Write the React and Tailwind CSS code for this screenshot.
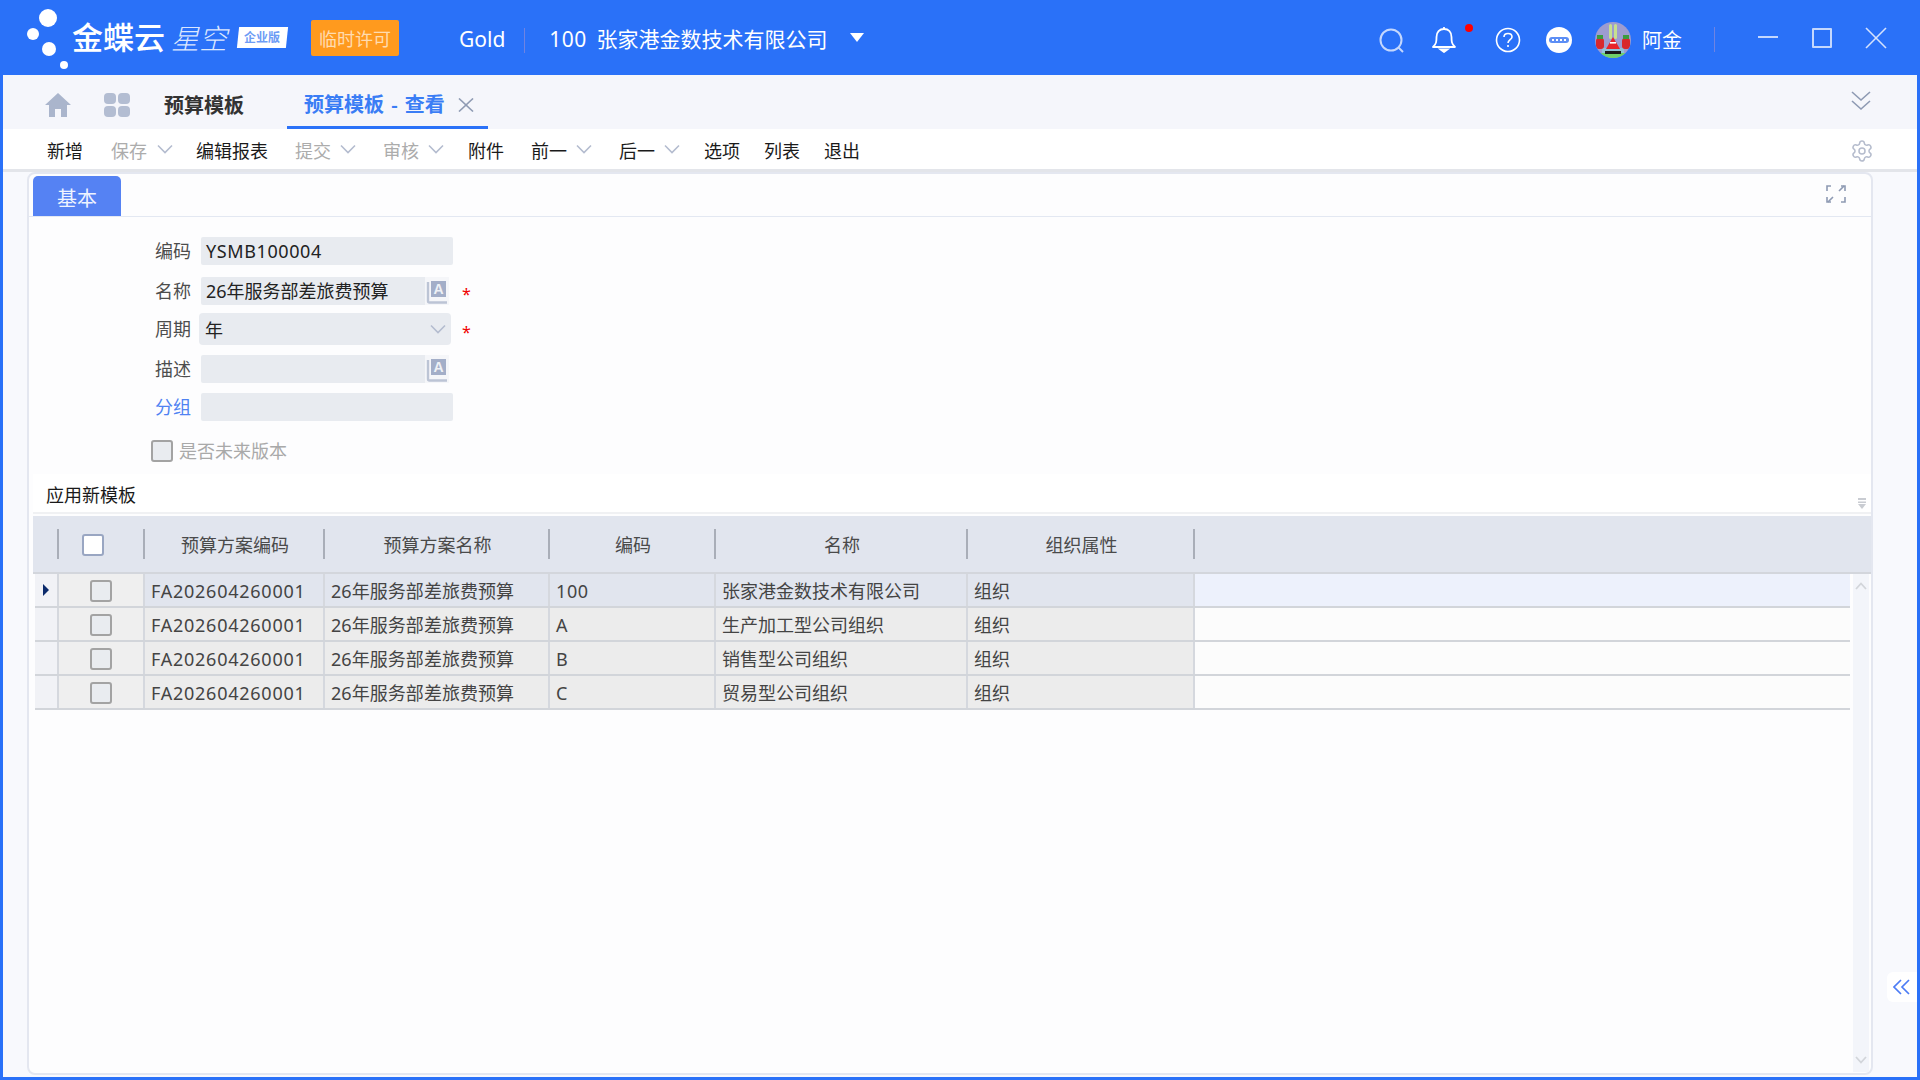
import React from "react";
import { Settings } from "lucide-react";

function Chev({ className = "", color = "#b4bccf" }) {
  return (
    <svg width="16" height="10" viewBox="0 0 16 10" fill="none" className={className}>
      <polyline points="1,1.5 8,8.5 15,1.5" stroke={color} strokeWidth="1.6" />
    </svg>
  );
}

function TransIcon() {
  return (
    <div className="w-[24px] h-[28px] bg-[#f5f6f9] flex items-center justify-center">
      <svg width="22" height="24" viewBox="0 0 22 24" fill="none" className="mt-[2px]">
        <rect x="5" y="1" width="15" height="16" fill="#a3aec8" />
        <path d="M2 2 V21 Q2 22.5 3.5 22.5 H21" stroke="#bcc4d5" strokeWidth="2.4" fill="none" />
        <text x="12.5" y="14" textAnchor="middle" fontSize="14" fontWeight="700" fill="#eef1f6" fontFamily="Liberation Sans, sans-serif">A</text>
      </svg>
    </div>
  );
}

function Avatar() {
  return (
    <svg width="36" height="36" viewBox="0 0 36 36" className="block">
      <defs><clipPath id="av"><circle cx="18" cy="18" r="18" /></clipPath></defs>
      <g clipPath="url(#av)">
        <rect width="36" height="36" fill="#9d9cd0" />
        <rect x="0" y="31" width="36" height="5" fill="#6fd06a" />
        <rect x="7" y="26" width="22" height="5" fill="#8fc3d8" />
        <rect x="10" y="29" width="16" height="3" fill="#1a1a1a" />
        <rect x="14" y="2" width="3" height="15" rx="1.5" fill="#c7e08f" />
        <rect x="19" y="2" width="3" height="15" rx="1.5" fill="#c7e08f" />
        <path d="M18 15 L25 27 H11 Z" fill="#e8242a" />
        <rect x="15" y="20" width="6" height="1.6" fill="#fff" />
        <rect x="1" y="16" width="8" height="11" rx="3" fill="#d8282c" />
        <rect x="27" y="16" width="8" height="11" rx="3" fill="#d8282c" />
        <rect x="2" y="13" width="6" height="4" fill="#3c9b3f" />
        <rect x="28" y="13" width="6" height="4" fill="#3c9b3f" />
      </g>
    </svg>
  );
}

function Header() {
  return (
    <div className="h-[75px] shrink-0 flex items-center text-white relative">
      <svg width="60" height="75" viewBox="0 0 60 75" className="ml-[20px] shrink-0" fill="#fff">
        <circle cx="28" cy="18" r="9" />
        <circle cx="13" cy="34" r="6" />
        <circle cx="29" cy="49" r="7" />
        <circle cx="44" cy="65" r="4" />
      </svg>
      <span className="ml-[-8px] text-[31px] leading-none font-medium text-white">金蝶云</span>
      <span className="ml-[6px] text-[28px] leading-none font-light italic text-[#dbe7ff]">星空</span>
      <div className="ml-[11px] w-[49px] h-[21px] bg-white -skew-x-6 flex items-center justify-center">
        <span className="text-[12px] leading-none font-bold text-[#6d9cf5] skew-x-6">企业版</span>
      </div>
      <div className="ml-[24px] w-[88px] h-[36px] bg-[#ff9a1e] rounded-[2px] flex items-center justify-center">
        <span className="text-[18px] leading-none text-[#ffdcb0] mt-[2px]">临时许可</span>
      </div>
      <span className="ml-[60px] text-[21px] leading-none mt-[4px]">Gold</span>
      <div className="ml-[19px] w-[1px] h-[25px] bg-[#6f83e2] mt-[6px]" />
      <span className="ml-[24px] text-[21px] leading-none mt-[4px] tracking-[0.4px]">100</span>
      <span className="ml-[10px] text-[21px] leading-none mt-[4px]">张家港金数技术有限公司</span>
      <svg width="14" height="9" viewBox="0 0 14 9" className="ml-[22px]" fill="#fff"><polygon points="0,0 14,0 7,9" /></svg>

      <div className="ml-auto flex items-center mt-[4px]">
        <svg width="28" height="28" viewBox="0 0 28 28" fill="none" stroke="#c4d7fd" strokeWidth="2" className="mt-[2px]">
          <circle cx="13" cy="13" r="10.5" />
          <line x1="20.5" y1="20.5" x2="25" y2="25" />
        </svg>
        <div className="relative ml-[24px] w-[28px] h-[28px] mb-[2px]">
          <svg width="28" height="28" viewBox="0 0 28 28" fill="none" stroke="#fff" strokeWidth="1.8">
            <path d="M3 22 C6.5 19 6.5 16 6.5 12 C6.5 7 9.5 4 14 4 C18.5 4 21.5 7 21.5 12 C21.5 16 21.5 19 25 22 Z" strokeLinejoin="round" />
            <path d="M14 2 V4" />
            <path d="M10.5 24.5 H17.5 L14 27 Z" fill="#fff" />
          </svg>
          <span className="absolute right-[-15px] top-[-1px] w-[8px] h-[8px] rounded-full bg-[#ff0000]" />
        </div>
        <svg width="26" height="26" viewBox="0 0 26 26" fill="none" stroke="#fff" strokeWidth="1.6" className="ml-[37px]">
          <circle cx="13" cy="13" r="11.5" />
          <path d="M9 10 C9 7.5 11 6.5 13 6.5 C15.5 6.5 17 8 17 10 C17 12.5 13 13 13 16" />
          <line x1="13" y1="18" x2="13" y2="20" />
        </svg>
        <div className="ml-[25px] w-[26px] h-[26px] rounded-full bg-white flex items-center justify-center">
          <div className="w-[20px] h-[6px] rounded-full bg-[#5c8ef5] flex items-center justify-center gap-[2px]">
            <span className="w-[2px] h-[2px] bg-white" />
            <span className="w-[2px] h-[2px] bg-white" />
            <span className="w-[2px] h-[2px] bg-white" />
            <span className="w-[2px] h-[2px] bg-white" />
          </div>
        </div>
        <div className="ml-[23px]"><Avatar /></div>
        <span className="ml-[11px] text-[20px] leading-none mt-[2px]">阿金</span>
        <div className="ml-[32px] w-[1px] h-[25px] bg-[#6f83e2]" />
        <div className="ml-[43px] w-[20px] h-[2px] bg-[#c4d7fd] mt-[-6px]" />
        <div className="ml-[34px] w-[20px] h-[20px] border-2 border-[#c4d7fd] rounded-[1px] mt-[-4px]" />
        <svg width="22" height="22" viewBox="0 0 22 22" className="ml-[33px] mr-[33px] mt-[-4px]" stroke="#d5e2fd" strokeWidth="1.6" fill="none">
          <line x1="1" y1="1" x2="21" y2="21" /><line x1="21" y1="1" x2="1" y2="21" />
        </svg>
      </div>
    </div>
  );
}

function TabBar() {
  return (
    <div className="h-[54px] shrink-0 bg-[#f5f6fb] flex items-center">
      <svg width="26" height="24" viewBox="0 0 26 24" className="ml-[42px] shrink-0 mt-[5px]" fill="#aab5cc">
        <path d="M13 0 L26 12 H22 V24 H16 V16 H10 V24 H4 V12 H0 Z" />
      </svg>
      <div className="ml-[33px] grid grid-cols-2 gap-[2px] w-[26px] h-[24px] shrink-0 mt-[5px]">
        <span className="bg-[#b3bdd2] rounded-[4px]" />
        <span className="bg-[#b3bdd2] rounded-[4px]" />
        <span className="bg-[#b3bdd2] rounded-[4px]" />
        <span className="bg-[#b3bdd2] rounded-[4px]" />
      </div>
      <span className="ml-[34px] text-[20px] leading-none font-semibold text-[#333] mt-[7px]">预算模板</span>
      <div className="ml-[43px] w-[201px] h-full border-b-[3px] border-[#2b72f8] flex items-center pl-[17px] pt-[9px]">
        <span className="text-[20px] leading-none font-semibold text-[#3a7df5] whitespace-nowrap [word-spacing:2px]">预算模板 - 查看</span>
        <svg width="16" height="14" viewBox="0 0 16 14" className="ml-[13px]" stroke="#8f9bb3" strokeWidth="1.6" fill="none">
          <line x1="1" y1="0.5" x2="15" y2="13.5" /><line x1="15" y1="0.5" x2="1" y2="13.5" />
        </svg>
      </div>
      <svg width="22" height="20" viewBox="0 0 22 20" className="ml-auto mr-[45px] mt-[-3px]" fill="none" stroke="#8e9ab3" strokeWidth="1.6">
        <polyline points="2,1 11,9 20,1" /><polyline points="2,10 11,18 20,10" />
      </svg>
    </div>
  );
}

function TB({ children, off, className = "" }) {
  return <span className={`text-[18px] leading-none whitespace-nowrap mt-[4px] ${off ? "text-[#acacac]" : "text-[#1a1a1a]"} ${className}`}>{children}</span>;
}

function Toolbar() {
  return (
    <div className="h-[43px] shrink-0 bg-white border-b-[3px] border-[#e3e5ea] flex items-center">
      <TB className="ml-[44px]">新增</TB>
      <TB off className="ml-[28px]">保存</TB>
      <Chev className="ml-[10px] mb-[1px]" />
      <TB className="ml-[23px]">编辑报表</TB>
      <TB off className="ml-[27px]">提交</TB>
      <Chev className="ml-[9px] mb-[1px]" />
      <TB off className="ml-[27px]">审核</TB>
      <Chev className="ml-[9px] mb-[1px]" />
      <TB className="ml-[24px]">附件</TB>
      <TB className="ml-[27px]">前一</TB>
      <Chev className="ml-[9px] mb-[1px]" />
      <TB className="ml-[27px]">后一</TB>
      <Chev className="ml-[9px] mb-[1px]" />
      <TB className="ml-[24px]">选项</TB>
      <TB className="ml-[24px]">列表</TB>
      <TB className="ml-[24px]">退出</TB>
      <Settings size={24} strokeWidth={1.5} color="#b5bccd" className="ml-auto mr-[43px] mt-[3px]" />
    </div>
  );
}

function Label({ children, blue }) {
  return <span className={`w-[158px] text-right text-[18px] leading-none ${blue ? "text-[#4f82f2]" : "text-[#4d4d4d]"}`}>{children}</span>;
}

function Form() {
  return (
    <div className="pl-[4px] shrink-0">
      <div className="mt-[20px] flex items-center h-[28px]">
        <Label>编码</Label>
        <div className="ml-[10px] w-[252px] h-[28px] rounded-[2px] bg-[#e8ebf0] flex items-center pl-[5px] text-[18px] leading-none text-[#222] tracking-[0.6px]">YSMB100004</div>
      </div>
      <div className="mt-[12px] flex items-center h-[28px]">
        <Label>名称</Label>
        <div className="ml-[10px] w-[224px] h-[28px] rounded-l-[2px] bg-[#e8ebf0] flex items-center pl-[5px] text-[18px] leading-none text-[#222]">26年服务部差旅费预算</div>
        <TransIcon />
        <span className="ml-[13px] text-[16px] leading-none text-[#f00000] mt-[6px]">*</span>
      </div>
      <div className="mt-[8px] flex items-center h-[32px]">
        <Label>周期</Label>
        <div className="ml-[8px] w-[252px] h-[32px] rounded-[4px] bg-[#e8ebf0] flex items-center pl-[6px] pr-[5px] text-[18px] leading-none text-[#222]">
          <span className="mt-[2px]">年</span>
          <Chev className="ml-auto" />
        </div>
        <span className="ml-[11px] text-[16px] leading-none text-[#f00000] mt-[6px]">*</span>
      </div>
      <div className="mt-[10px] flex items-center h-[28px]">
        <Label>描述</Label>
        <div className="ml-[10px] w-[224px] h-[28px] rounded-l-[2px] bg-[#e8ebf0]" />
        <TransIcon />
      </div>
      <div className="mt-[10px] flex items-center h-[28px]">
        <Label blue>分组</Label>
        <div className="ml-[10px] w-[252px] h-[28px] rounded-[2px] bg-[#e8ebf0]" />
      </div>
      <div className="mt-[19px] flex items-center h-[22px] pl-[118px]">
        <span className="w-[22px] h-[22px] border-2 border-[#a3a3a3] rounded-[3px] bg-[#e9ecf0]" />
        <span className="ml-[6px] text-[18px] leading-none text-[#a9a9a9]">是否未来版本</span>
      </div>
    </div>
  );
}

const rows = [
  ["100", "张家港金数技术有限公司"],
  ["A", "生产加工型公司组织"],
  ["B", "销售型公司组织"],
  ["C", "贸易型公司组织"],
];

function Grid() {
  return (
    <div className="flex-1 min-h-0 flex flex-col pl-[4px]">
      <div className="mt-[12px] h-[38px] shrink-0 bg-white flex items-center pl-[13px]">
        <span className="text-[18px] leading-none text-[#1a1a1a] mt-[4px]">应用新模板</span>
        <svg width="10" height="11" viewBox="0 0 10 11" className="ml-auto mr-[4px] mt-[20px]" fill="#c9ccd2">
          <rect x="1" y="0" width="8" height="2" /><rect x="1" y="3.5" width="8" height="1.5" /><polygon points="1,6 9,6 5,11" />
        </svg>
      </div>
      <div className="h-[4px] shrink-0 border-t-2 border-[#f0f1f3]" />
      <div className="h-[58px] shrink-0 bg-[#e1e5ee] border-b-2 border-[#d3d6dc] grid grid-cols-[26px_86px_180px_225px_166px_252px_227px_1fr] items-center text-[18px] leading-none text-[#4a4a4a]">
        <div className="h-[30px] border-r-2 border-[#a9aeb8]" />
        <div className="h-[30px] border-r-2 border-[#a9aeb8] flex items-center pl-[23px] pt-[2px]">
          <span className="w-[22px] h-[22px] bg-white border-2 border-[#99a6c2] rounded-[3px]" />
        </div>
        <div className="h-[30px] border-r-2 border-[#a9aeb8] flex items-center justify-center pl-[2px] pt-[2px]">预算方案编码</div>
        <div className="h-[30px] border-r-2 border-[#a9aeb8] flex items-center justify-center pl-[2px] pt-[2px]">预算方案名称</div>
        <div className="h-[30px] border-r-2 border-[#a9aeb8] flex items-center justify-center pl-[2px] pt-[2px]">编码</div>
        <div className="h-[30px] border-r-2 border-[#a9aeb8] flex items-center justify-center pl-[2px] pt-[2px]">名称</div>
        <div className="h-[30px] border-r-2 border-[#a9aeb8] flex items-center justify-center pl-[2px] pt-[2px]">组织属性</div>
        <div />
      </div>
      <div className="flex-1 min-h-0 flex pb-[1px]">
        <div className="flex-1 pl-[2px]">
          {rows.map((r, i) => {
            const sel = i === 0;
            const cell = `flex items-center border-r-2 border-[#d5d8de] pl-[6px] pt-[1px] ${sel ? "bg-[#e1e5ee]" : "bg-[#ececec]"}`;
            return (
              <div key={r[0]} className="h-[34px] border-b-2 border-[#d2d5da] grid grid-cols-[24px_86px_180px_225px_166px_252px_227px_1fr] text-[18px] leading-none text-[#444]">
                <div className="bg-[#f1f2f6] border-r-2 border-[#d5d8de] flex items-center pl-[8px]">
                  {sel && <svg width="6" height="12" viewBox="0 0 6 12" fill="#0b2a6b"><polygon points="0,0 6,6 0,12" /></svg>}
                </div>
                <div className="bg-[#efefef] border-r-2 border-[#d5d8de] flex items-center pl-[31px] pt-[2px]">
                  <span className="w-[22px] h-[22px] border-2 border-[#a3a3a3] rounded-[3px] bg-[#e9ecf0]" />
                </div>
                <div className={`${cell} pl-[6px] tracking-[0.75px]`}>FA202604260001</div>
                <div className={`${cell} tracking-[0.05px]`}>26年服务部差旅费预算</div>
                <div className={`${cell} pl-[6px] tracking-[0.6px]`}>{r[0]}</div>
                <div className={`${cell} pl-[5px]`}>{r[1]}</div>
                <div className={`${cell} pl-[6px]`}>组织</div>
                <div className={sel ? "bg-[#edf1fc]" : "bg-[#fcfcfc]"} />
              </div>
            );
          })}
        </div>
        <div className="w-[16px] ml-[3px] mr-[2px] bg-[#f3f5fa] flex flex-col items-center justify-between py-[8px]">
          <svg width="12" height="8" viewBox="0 0 12 8" fill="none" stroke="#d2d5da" strokeWidth="1.8"><polyline points="1,7 6,1.5 11,7" /></svg>
          <svg width="12" height="8" viewBox="0 0 12 8" fill="none" stroke="#d2d5da" strokeWidth="1.8"><polyline points="1,1 6,6.5 11,1" /></svg>
        </div>
      </div>
    </div>
  );
}

function Panel() {
  return (
    <div className="flex-1 min-h-0 bg-[#f8f9fd] flex relative">
      <div className="ml-[24px] mr-[44px] mb-[2px] flex-1 min-w-0 flex flex-col bg-[#fdfdfe] border-2 border-[#e4e7f0] rounded-[8px]">
        <div className="h-[43px] shrink-0 border-b-[1px] border-[#e3e8f2] flex items-end pl-[4px]">
          <div className="w-[88px] h-[40px] rounded-t-[5px] bg-[#5582f3] text-[#eef3ff] text-[20px] leading-none flex items-center justify-center pt-[5px]">基本</div>
          <svg width="20" height="18" viewBox="0 0 20 18" className="ml-auto mr-[25px] mb-[13px]" fill="none" stroke="#8e9ab3" strokeWidth="1.6">
            <path d="M1 6 V1 H5 M19 6 V1 H15 M1 12 V17 H5 M19 12 V17 H15" />
            <path d="M13 6 L18 1 M7 12 L2 17" />
          </svg>
        </div>
        <Form />
        <Grid />
      </div>
      <div className="absolute right-0 top-[800px] w-[30px] h-[30px] bg-white rounded-l-[6px] flex items-center justify-center">
        <svg width="18" height="16" viewBox="0 0 18 16" fill="none" stroke="#4c7cf5" strokeWidth="1.7">
          <polyline points="8,1 1,8 8,15" /><polyline points="16,1 9,8 16,15" />
        </svg>
      </div>
    </div>
  );
}

export default function App() {
  return (
    <div className="w-[1920px] h-[1080px] overflow-hidden bg-[#2a71f8] flex flex-col font-['Noto_Sans','Noto_Sans_CJK_SC',sans-serif]">
      <Header />
      <div className="flex-1 min-h-0 mx-[3px] mb-[3px] flex flex-col">
        <TabBar />
        <Toolbar />
        <Panel />
      </div>
    </div>
  );
}
